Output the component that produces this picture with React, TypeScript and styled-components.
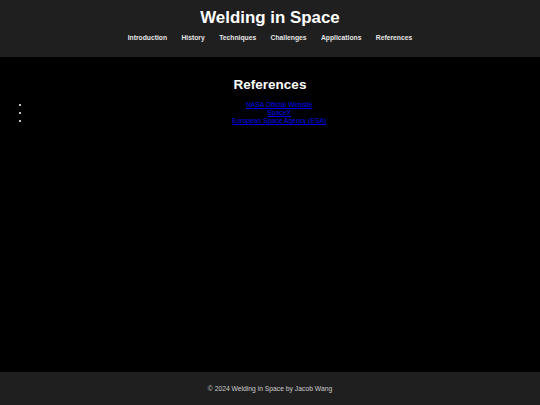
import React from "react";
import styled, { createGlobalStyle } from "styled-components";

const navItems = [
	"Introduction",
	"History",
	"Techniques",
	"Challenges",
	"Applications",
	"References",
];

const references = [
	{ label: "NASA Official Website", href: "#nasa" },
	{ label: "SpaceX", href: "#spacex" },
	{ label: "European Space Agency (ESA)", href: "#esa" },
];

const GlobalStyle = createGlobalStyle`
	html, body {
		margin: 0;
		padding: 0;
		background: #000;
	}
	body {
		font-family: "Liberation Sans", Arial, sans-serif;
		color: #fff;
	}
`;

export default function App() {
	return (
		<>
			<GlobalStyle />
			<Page>
				<Header>
					<Title>Welding in Space</Title>
					<Nav>
						{navItems.map((item) => (
							<NavLink key={item} href={`#${item.toLowerCase()}`}>
								{item}
							</NavLink>
						))}
					</Nav>
				</Header>
				<Main>
					<Section>
						<SectionTitle>References</SectionTitle>
						<RefList>
							{references.map((ref) => (
								<RefItem key={ref.label}>
									<RefLink href={ref.href}>{ref.label}</RefLink>
								</RefItem>
							))}
						</RefList>
					</Section>
				</Main>
				<Footer>© 2024 Welding in Space by Jacob Wang</Footer>
			</Page>
		</>
	);
}

const Page = styled.div`
	display: flex;
	flex-direction: column;
	width: 100%;
	height: 100vh;
	background: #000;
`;

const Header = styled.header`
	background: #1f1f1f;
	padding: 7.6px 0 14.9px;
	text-align: center;
`;

const Title = styled.h1`
	margin: 0 0 7.3px;
	font-size: 16.9px;
	line-height: 19.4px;
	font-weight: bold;
	color: #fff;
`;

const Nav = styled.nav`
	display: flex;
	justify-content: center;
	gap: 14.4px;
`;

const NavLink = styled.a`
	font-size: 6.75px;
	line-height: 7.8px;
	font-weight: bold;
	color: #e6e6e6;
	text-decoration: none;
`;

const Main = styled.main`
	flex: 1;
	padding: 8.4px;
	text-align: center;
`;

const Section = styled.section`
	display: flex;
	flex-direction: column;
`;

const SectionTitle = styled.h2`
	margin: 11.2px 0 9.4px;
	font-size: 13.5px;
	line-height: 15.5px;
	font-weight: bold;
	color: #fff;
`;

const RefList = styled.ul`
	margin: 0;
	padding: 0 3px 0 21.4px;
`;

const RefItem = styled.li`
	font-size: 6.75px;
	line-height: 7.8px;
	color: #fff;
`;

const RefLink = styled.a`
	color: #0000ee;
	text-decoration: underline;
`;

const Footer = styled.footer`
	background: #1f1f1f;
	padding: 12.65px 0;
	font-size: 6.75px;
	line-height: 7.8px;
	color: #ccc;
	text-align: center;
`;
